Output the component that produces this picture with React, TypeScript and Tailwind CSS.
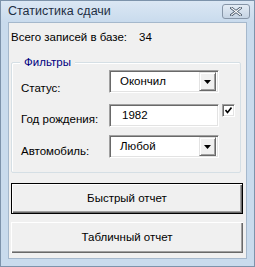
import React from "react";

const font = { fontFamily: '"Liberation Sans", Arial, sans-serif' };

function Arrow() {
  return (
    <div className="w-[17px] h-[19px] bg-[#f0f0f0] border-t border-l border-t-[#e3e3e3] border-l-[#e3e3e3] border-r border-b border-r-[#696969] border-b-[#696969] flex items-center justify-center shadow-[inset_1px_1px_0_#ffffff,inset_-1px_-1px_0_#a0a0a0]">
      <svg width="7" height="4" viewBox="0 0 7 4">
        <polygon points="0,0 7,0 3.5,4" fill="#000" />
      </svg>
    </div>
  );
}

const sunken =
  "bg-white border-t border-l border-t-[#a0a0a0] border-l-[#a0a0a0] border-r border-b border-r-white border-b-white shadow-[inset_1px_1px_0_#696969,inset_-1px_-1px_0_#e3e3e3]";

function Combo({ value }: { value: string }) {
  return (
    <div className={"w-[110px] h-[23px] flex items-center justify-between pl-[10px] pr-[2px] " + sunken}>
      <span className="text-[11.5px] text-black leading-none">{value}</span>
      <Arrow />
    </div>
  );
}

export default function App() {
  return (
    <div style={font} className="w-[255px] h-[267px] bg-[#c9dbed] border border-[#7d93ab] flex flex-col">
      <div className="h-[21px] flex items-center justify-between pl-[7px] pr-[4px] bg-gradient-to-b from-[#dbe7f4] to-[#c9dbed]">
        <span className="text-[12.5px] text-[#1e2f44]">Статистика сдачи</span>
        <div className="w-[28px] h-[15px] rounded-[3px] border border-[#8796a8] bg-gradient-to-b from-[#e4ecf5] to-[#c5d4e4] flex items-center justify-center">
          <svg width="12" height="9" viewBox="0 0 12 9">
            <path d="M1.5 1 L10.5 8 M10.5 1 L1.5 8" stroke="#3b4b5e" strokeWidth="2.6" strokeLinecap="square" />
            <path d="M1.5 1 L10.5 8 M10.5 1 L1.5 8" stroke="#ffffff" strokeWidth="1.2" strokeLinecap="square" />
          </svg>
        </div>
      </div>
      <div className="ml-[7px] mr-[7px] h-[237px] bg-[#f0f0f0] border border-[#a5b8cc] flex flex-col pl-[2px] pr-[4px]">
        <div className="flex items-center h-[14px] mt-[8px] text-[11.5px] text-black">
          <span className="w-[128px]">Всего записей в базе:</span>
          <span>34</span>
        </div>
        <div className="relative mt-[17px] w-[230px] h-[111px] border border-[#d5dfe5] rounded-[2px] shadow-[inset_1px_1px_0_#ffffff]">
          <span className="absolute left-[8px] top-[-8px] bg-[#f0f0f0] px-[4px] text-[11.5px] text-[#000080] leading-[14px]">Фильтры</span>
          <div className="flex flex-col pl-[9px] pt-[7px]">
            <div className="flex items-start h-[23px]">
              <span className="w-[88px] text-[11.5px] text-black leading-[14px] pt-[11px]">Статус:</span>
              <Combo value="Окончил" />
            </div>
            <div className="flex items-start h-[23px] mt-[11px]">
              <span className="w-[88px] text-[11.5px] text-black leading-[14px] pt-[8px]">Год рождения:</span>
              <div className={"w-[110px] h-[23px] flex items-center pl-[12px] " + sunken}>
                <span className="text-[11.5px] text-black leading-none">1982</span>
              </div>
              <div className={"ml-[3px] w-[13px] h-[13px] flex items-center justify-center " + sunken}>
                <svg width="7" height="7" viewBox="0 0 7 7">
                  <path d="M0.5 3 L2.5 5.5 L6.5 0.5" stroke="#000" strokeWidth="1.6" fill="none" />
                </svg>
              </div>
            </div>
            <div className="flex items-start h-[23px] mt-[8px]">
              <span className="w-[88px] text-[11.5px] text-black leading-[14px] pt-[9px]">Автомобиль:</span>
              <Combo value="Любой" />
            </div>
          </div>
        </div>
        <button className="mt-[10px] w-[232px] h-[31px] border border-black bg-[#f0f0f0] text-[11.5px] text-black shadow-[inset_1px_1px_0_#ffffff,inset_-1px_-1px_0_#696969,inset_-2px_-2px_0_#a0a0a0]">
          Быстрый отчет
        </button>
        <button className="mt-[8px] w-[232px] h-[31px] bg-[#f0f0f0] text-[11.5px] text-black shadow-[inset_1px_1px_0_#ffffff,inset_-1px_-1px_0_#696969,inset_-2px_-2px_0_#a0a0a0]">
          Табличный отчет
        </button>
      </div>
    </div>
  );
}
